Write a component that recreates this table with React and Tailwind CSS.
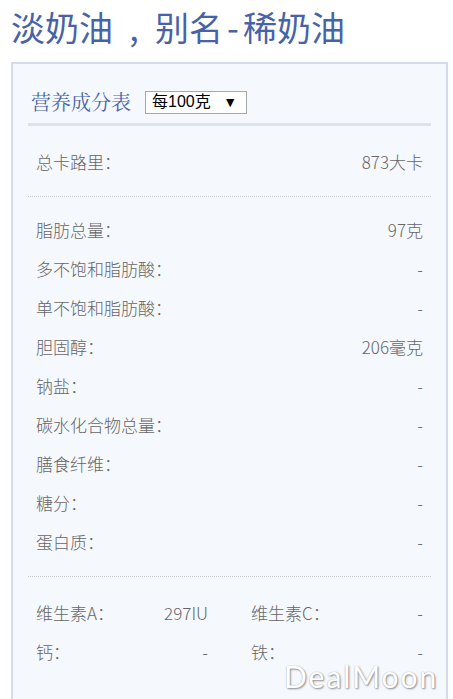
import React from "react";

const rows = [
  ["脂肪总量：", "97克"],
  ["多不饱和脂肪酸：", "-"],
  ["单不饱和脂肪酸：", "-"],
  ["胆固醇：", "206毫克"],
  ["钠盐：", "-"],
  ["碳水化合物总量：", "-"],
  ["膳食纤维：", "-"],
  ["糖分：", "-"],
  ["蛋白质：", "-"],
];

function Row({ label, value }) {
  return (
    <div className="flex h-[39px] items-center justify-between">
      <span>{label}</span>
      <span>{value}</span>
    </div>
  );
}

export default function App() {
  return (
    <div className="relative h-[699px] w-[453px] overflow-hidden bg-white font-['Noto_Sans_CJK_SC',sans-serif]">
      <h1 className="flex pl-[11px] pt-[5px] text-[34px] leading-[44px] text-[#4862a8]">
        <span>淡奶油</span>
        <span className="w-[42px] text-center">,</span>
        <span>别名</span>
        <span className="w-[20px] text-center">-</span>
        <span>稀奶油</span>
      </h1>
      <div className="ml-[11px] mt-[13px] w-[437px] h-[700px] border-2 border-[#d6dbea] bg-[#f5f8fd] px-[15px] pt-[23px]">
        <div className="flex items-center pl-[3px]">
          <span className="font-['Noto_Serif_CJK_SC','Noto_Sans_CJK_SC',serif] text-[20px] leading-[30px] text-[#4a64a8]">营养成分表</span>
          <div className="ml-[14px] flex h-[23px] w-[102px] items-center justify-between border border-[#a8a8a8] bg-white pl-[6px] pr-[9px] text-[16px] text-black font-['Liberation_Sans','Noto_Sans_CJK_SC',sans-serif]">
            <span>每100克</span>
            <span className="text-[14px]">▼</span>
          </div>
        </div>
        <div className="mt-[6px] h-[3px] bg-[#dde2f0]" />
        <div className="text-[17px] font-light text-[#666] px-[8px]">
          <div className="pt-[16px] pb-[15px]">
            <Row label="总卡路里：" value="873大卡" />
          </div>
          <div className="-mx-[8px] border-t border-dotted border-[#c9ccd4]" />
          <div className="pt-[13px] pb-[15px]">
            {rows.map(([l, v]) => (
              <Row key={l} label={l} value={v} />
            ))}
          </div>
          <div className="-mx-[8px] border-t border-dotted border-[#c9ccd4]" />
          <div className="pt-[16px] grid grid-cols-2 gap-x-[43px]">
            <Row label="维生素A：" value="297IU" />
            <Row label="维生素C：" value="-" />
            <Row label="钙：" value="-" />
            <Row label="铁：" value="-" />
          </div>
        </div>
      </div>
      <div className="absolute left-[284px] top-[656px] text-[30px] leading-[40px] tracking-[2px] text-white font-['Lato','Liberation_Sans',sans-serif] [text-shadow:1px_1px_2px_#8a8a8a,0_0_1px_#aaa]">
        DealMoon
      </div>
    </div>
  );
}
